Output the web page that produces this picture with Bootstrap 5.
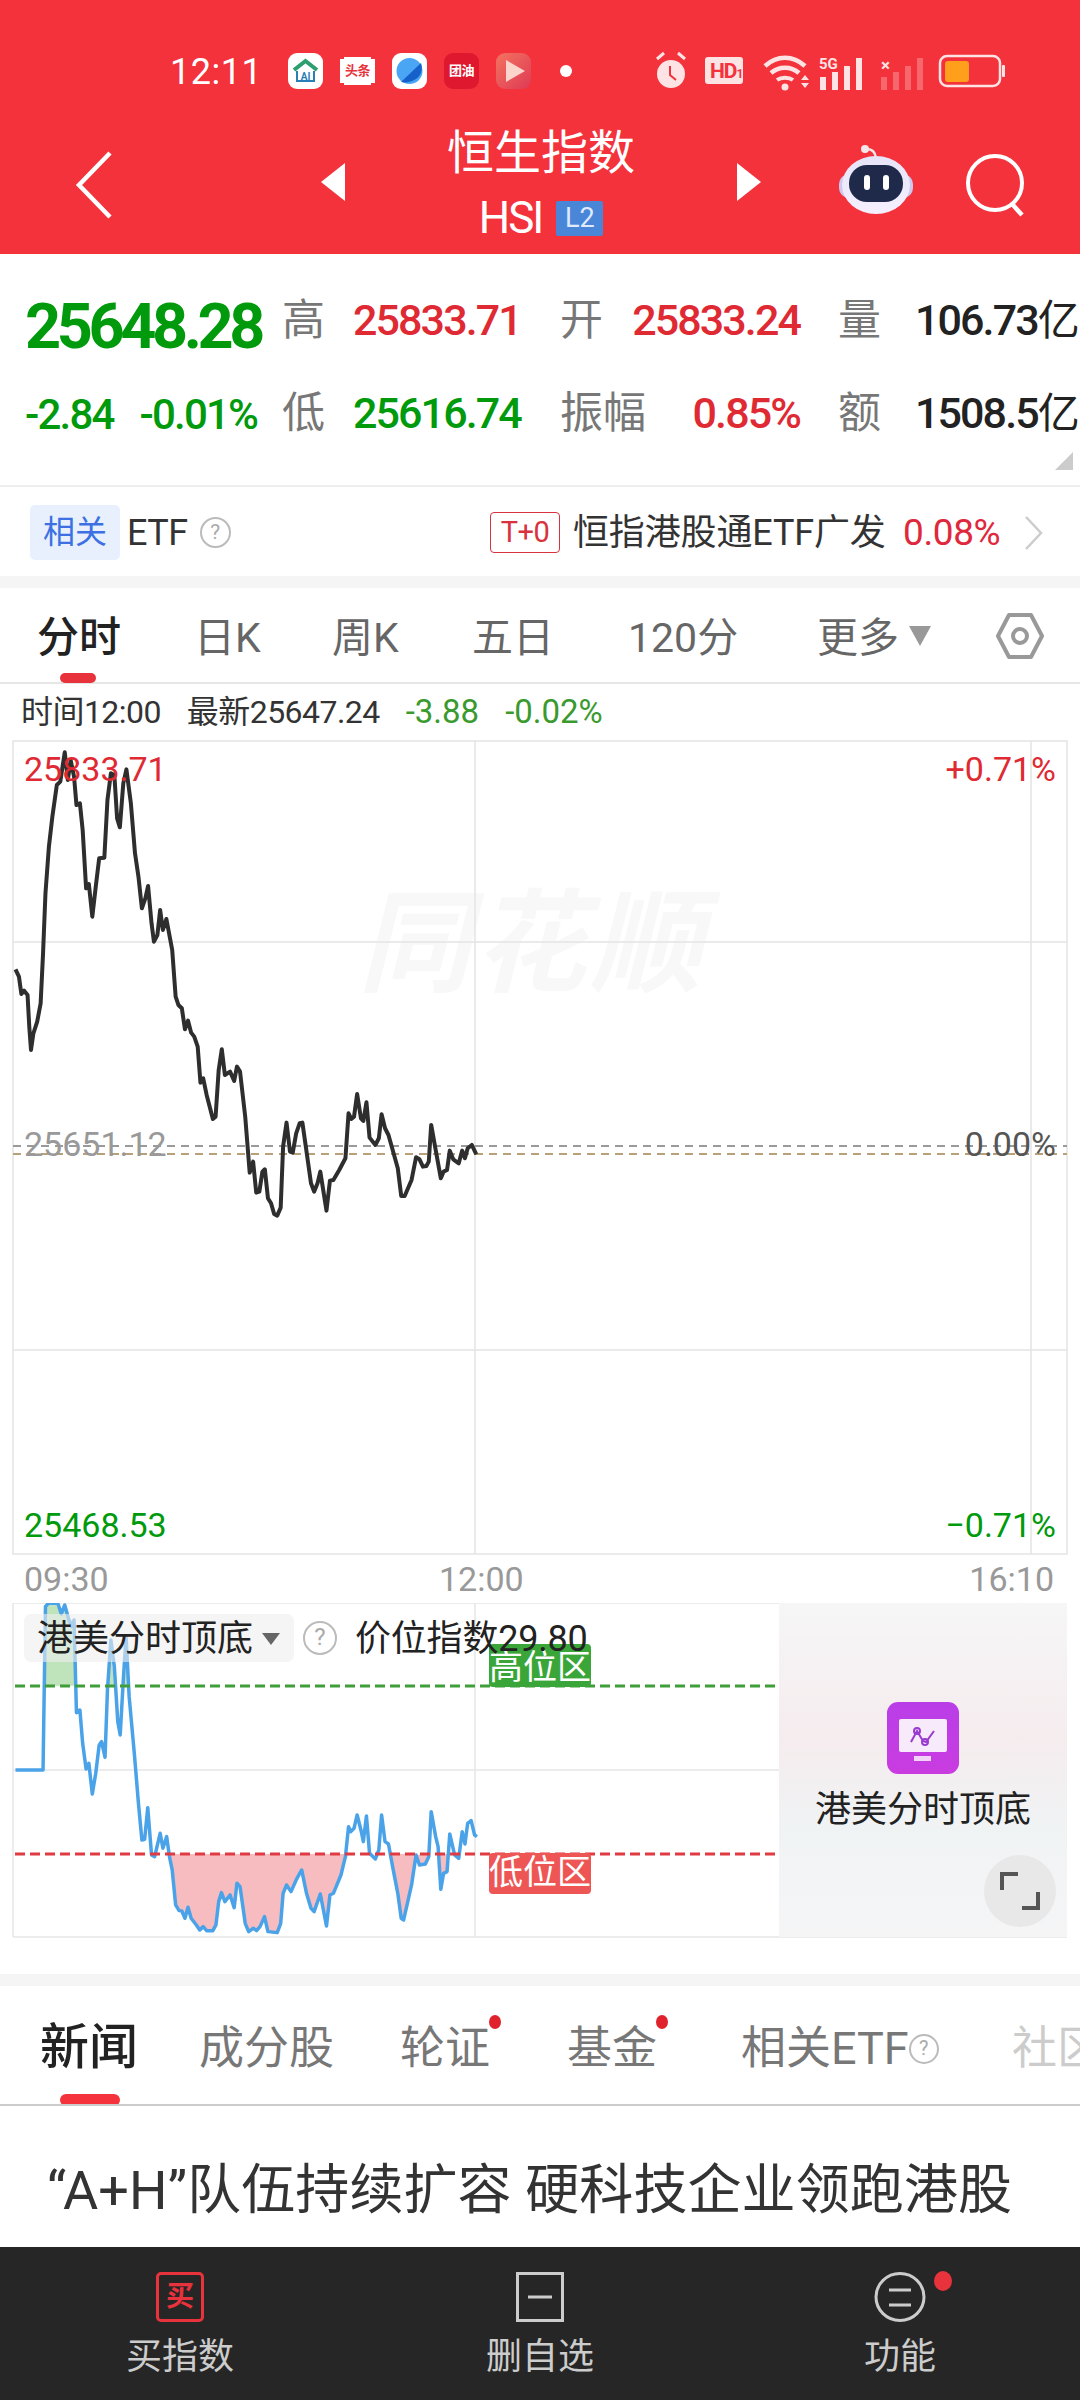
<!DOCTYPE html>
<html lang="zh-CN">
<head>
  <meta charset="UTF-8">
  <title>恒生指数 HSI</title>
  <link href="https://cdn.jsdelivr.net/npm/bootstrap@5.3.0/dist/css/bootstrap.min.css" rel="stylesheet">
  <style>
    html, body { width: 1080px; height: 2400px; overflow: hidden; }
    body { background: #fff; font-family: Roboto, "Noto Sans CJK SC", sans-serif; color: #222; }
    .screen { position: relative; width: 1080px; height: 2400px; overflow: hidden; }

    .top-red { background: #f3323b; height: 254px; color: #fff; }
    .status-row { height: 110px; padding: 52px 0 0 170px; }
    .clock { font-size: 36px; line-height: 40px; width: 118px; letter-spacing: .5px; color: #fff; }
    .app-ico { width: 35px; height: 36px; border-radius: 9px; margin-right: 17px; flex: none; margin-top: 1px; }
    .app-ico svg { display: block; }
    .app-txt { font-size: 13px; font-weight: 700; line-height: 36px; text-align: center; letter-spacing: -.5px; }
    .ico-white { background: #fff; }
    .ico-red { background: #e0182f; color: #fff; }
    .ico-orange { background: linear-gradient(135deg, #f4735f, #de3a55); }
    .ico-news { color: #e8323c; background: #fff; height: 24px; margin-top: 7px; line-height: 24px; border-radius: 0; box-shadow: 0 -6px 0 -4px #fff, 0 6px 0 -4px #fff; }
    .note-dot { width: 12px; height: 12px; border-radius: 50%; background: #fff; margin: 13px 0 0 12px; }
    .sys-icons { position: absolute; left: 655px; top: 49px; }

    .nav-row { height: 144px; position: relative; }
    .title-block { width: 392px; text-align: center; }
    .index-name { font-size: 47px; line-height: 56px; padding-top: 15px; color: #fff; }
    .index-code { font-size: 44px; line-height: 50px; margin-top: 12px; letter-spacing: -2px; gap: 14px; }
    .l2-tag { background: #4a86d8; color: #dfeaff; font-size: 27px; line-height: 35px; width: 47px; height: 35px; border-radius: 2px; letter-spacing: 0; }
    .nav-back { width: 321px; padding: 40px 0 0 74px; }
    .nav-side { width: 24px; padding-top: 53px; }
    .nav-robot { position: absolute; left: 838px; top: 34px; }
    .nav-search { position: absolute; left: 964px; top: 40px; }

    .stat-wrap { height: 231px; position: relative; padding: 38px 0 0 25px; }
    .stat-line { display: flex; height: 93px; align-items: flex-start; white-space: nowrap; }
    .stat-main { width: 257px; }
    .stat-lab { font-size: 43px; line-height: 56px; color: #777; width: 71px; }
    .stat-lab-b { width: 72px; }
    .stat-lab-c { width: 77px; margin-left: 38px; }
    .stat-val { font-size: 43px; line-height: 56px; font-weight: 500; letter-spacing: -1.9px; width: 207px; }
    .stat-val-b { width: 168px; text-align: right; }
    .stat-qty { font-size: 43px; line-height: 56px; font-weight: 500; letter-spacing: -1.9px; color: #222; }
    .cn-yi { font-weight: 400; font-size: 42px; letter-spacing: 0; }
    .big-price { font-size: 63px; line-height: 70px; font-weight: 700; letter-spacing: -4.4px; color: #009a0c; }
    .small-chg { font-size: 42px; line-height: 56px; font-weight: 500; letter-spacing: -1.8px; color: #009a0c; margin-top: 2px; gap: 26px; }
    .up-red { color: #df2a33; }
    .down-green { color: #009a0c; }
    .fold-mark { position: absolute; right: 7px; bottom: 15px; width: 0; height: 0; border-left: 18px solid transparent; border-bottom: 18px solid #ccc; }

    .etf-row { height: 91px; border-top: 2px solid #eee; padding-left: 30px; padding-top: 2px; }
    .etf-tag { width: 90px; height: 55px; background: #e8f0fd; color: #3d70e2; font-size: 32px; line-height: 55px; border-radius: 5px; text-align: center; }
    .etf-word { font-size: 36px; margin-left: 7px; color: #333; letter-spacing: -.5px; }
    .hint-ring { width: 31px; height: 31px; border: 2px solid #bbb; border-radius: 50%; color: #aaa; font-size: 21px; line-height: 27px; text-align: center; margin-left: 12px; flex: none; }
    .tplus { position: absolute; left: 490px; width: 70px; height: 41px; border: 1.5px solid #d8323c; border-radius: 4px; color: #d8323c; font-size: 29px; line-height: 38px; text-align: center; letter-spacing: -.5px; }
    .etf-name { position: absolute; left: 573px; font-size: 36px; color: #333; letter-spacing: -.15px; }
    .etf-pct { position: absolute; left: 903px; font-size: 37px; color: #e0283c; letter-spacing: -.4px; }
    .etf-arrow { position: absolute; left: 1024px; }

    .gap-band { height: 12px; background: #f5f5f5; }

    .period-tabs { height: 96px; border-bottom: 2px solid #e6e6e6; position: relative; }
    .period-tab { position: absolute; top: 23px; font-size: 41px; line-height: 54px; color: #666; white-space: nowrap; }
    .period-on { color: #222; font-weight: 500; font-size: 42px; }
    .tab-bar-red { position: absolute; left: 60px; top: 85px; width: 36px; height: 10px; border-radius: 5px; background: #e8323c; }

    .quote-line { height: 56px; padding-left: 21px; font-size: 32px; letter-spacing: -.55px; gap: 26px; color: #333; }
    .green-soft { color: #3a9a2e; font-size: 33px; letter-spacing: 0; }

    .chart-box { position: relative; height: 863px; }
    .chart-box svg { position: absolute; left: 0; top: 0; }
    .chart-lab { position: absolute; font-size: 34px; line-height: 40px; white-space: nowrap; }
    .lab-grey { color: #999; }
    .wm-text { position: absolute; left: 358px; top: 140px; font-size: 112px; line-height: 130px; letter-spacing: 4px; color: #f8f8f8; font-weight: 700; font-style: italic; white-space: nowrap; }

    .sub-chart { position: relative; height: 371px; }
    .sub-chart > svg { position: absolute; left: 0; top: 0; }
    .algo-chip { position: absolute; left: 24px; top: 11px; width: 270px; height: 48px; background: rgba(238,238,238,.6); border-radius: 7px; font-size: 36px; line-height: 50px; padding-left: 13px; color: #222; white-space: nowrap; }
    .algo-caret { position: absolute; left: 238px; top: 19px; width: 0; height: 0; border-left: 9px solid transparent; border-right: 9px solid transparent; border-top: 12px solid #666; }
    .algo-ring { position: absolute; left: 303px; top: 18px; width: 34px; height: 34px; font-size: 24px; line-height: 29px; margin: 0; border-width: 2.5px; }
    .algo-val { position: absolute; left: 355px; top: 10px; font-size: 36px; line-height: 52px; color: #222; white-space: nowrap; letter-spacing: -.2px; z-index: 3; }
    .zone-tag { position: absolute; left: 489px; width: 102px; color: #fff; font-size: 34px; text-align: center; border-radius: 4px; }
    .zone-high { top: 41px; height: 43px; line-height: 46px; background: #3aa639; }
    .zone-low { top: 250px; height: 41px; line-height: 38px; background: #ee5555; }
    .algo-panel { position: absolute; left: 779px; top: 0; width: 288px; height: 334px; background: linear-gradient(180deg, #f6f6f7 0%, #f5ecee 40%, #f0f3f4 68%, #f5f5f6 100%); }
    .algo-panel svg { position: absolute; left: 108px; top: 99px; }
    .algo-name { position: absolute; left: 0; width: 100%; top: 183px; text-align: center; font-size: 36px; line-height: 48px; color: #222; }
    .zoom-btn { position: absolute; left: 205px; top: 252px; width: 72px; height: 72px; border-radius: 50%; background: #e8e8e8; }
    .zoom-btn svg { position: absolute; left: 15px; top: 15px; }

    .news-tabs { height: 120px; border-bottom: 2px solid #ccc; position: relative; overflow: hidden; }
    .news-tab { position: absolute; top: 33px; font-size: 45px; line-height: 60px; color: #777; white-space: nowrap; }
    .news-on { font-size: 49px; color: #222; font-weight: 500; top: 32px; }
    .news-dot { position: absolute; top: 29px; width: 12px; height: 14px; border-radius: 50%; background: #e0222c; }
    .news-bar { position: absolute; left: 60px; top: 108px; width: 60px; height: 12px; border-radius: 6px; background: #f4333c; }
    .news-fade { color: #ccc; }
    .news-head { font-size: 54px; line-height: 70px; color: #333; padding: 50px 0 0 47px; letter-spacing: .1px; white-space: nowrap; }

    .bottom-bar { position: absolute; left: 0; top: 2247px; width: 1080px; height: 153px; background: #262626; color: #ccc; }
    .bar-item { width: 360px; position: relative; text-align: center; padding-top: 25px; }
    .bar-item svg { display: block; margin: 0 auto; }
    .bar-word { font-size: 36px; line-height: 46px; margin-top: 12px; }
    .buy-box { width: 48px; height: 50px; border: 3px solid #e8323c; border-radius: 5px; margin: 0 auto; color: #e8323c; font-size: 28px; line-height: 43px; font-weight: 700; }
    .fn-dot { position: absolute; left: 214px; top: 24px; width: 18px; height: 20px; border-radius: 50%; background: #e8323c; }
  </style>
</head>
<body>
<div class="screen">

  <div class="top-red">
    <div class="status-row d-flex position-relative">
      <div class="clock">12:11</div>
      <div class="app-ico ico-white">
        <svg width="35" height="36" viewBox="0 0 35 36"><path d="M6 17 17.5 8 29 17" fill="none" stroke="#2f9e6e" stroke-width="4"/><path d="M9 18v10h17V18" fill="none" stroke="#2b7fb8" stroke-width="2"/><text x="17.5" y="27" text-anchor="middle" font-size="10" font-weight="700" fill="#2b7fb8" font-family="Roboto">AI</text></svg>
      </div>
      <div class="app-ico app-txt ico-news">头条</div>
      <div class="app-ico ico-white">
        <svg width="35" height="36" viewBox="0 0 35 36"><circle cx="17.5" cy="18" r="13" fill="#4aa6f5"/><path d="M9 29 29 10c2 6 0 13-5 16-5 3-10 4-15 3Z" fill="#1560c9"/></svg>
      </div>
      <div class="app-ico app-txt ico-red">团油</div>
      <div class="app-ico ico-orange">
        <svg width="35" height="36" viewBox="0 0 35 36"><path d="M10 7 29 18 10 29Z" fill="#fbd5cc"/></svg>
      </div>
      <div class="note-dot"></div>
      <svg class="sys-icons" width="355" height="46" viewBox="0 0 355 46">
        <g fill="#fde3e3">
          <circle cx="16" cy="25" r="14"/>
          <path d="M2 10 9 4M30 10 23 4" stroke="#fde3e3" stroke-width="3" fill="none"/>
          <path d="M15 17v9l6 5" stroke="#f3323b" stroke-width="2" fill="none"/>
          <rect x="50" y="8" width="38" height="27" rx="3"/>
          <path d="M110 17c12-11 28-11 40 0" stroke="#fde3e3" stroke-width="4.5" fill="none"/>
          <path d="M116 24c8-7 20-7 28 0" stroke="#fde3e3" stroke-width="4.5" fill="none"/>
          <path d="M122 31c4-3 12-3 16 0" stroke="#fde3e3" stroke-width="4" fill="none"/>
          <circle cx="130" cy="38" r="3.5"/>
          <path d="M146 31l4-5 4 5ZM146 34l4 5 4-5Z"/>
          <rect x="165" y="28" width="6" height="13"/><rect x="177" y="23" width="6" height="18"/><rect x="189" y="17" width="6" height="24"/><rect x="201" y="9" width="6" height="32"/>
        </g>
        <text x="164" y="20" font-size="15" font-weight="700" fill="#fde3e3" font-family="Roboto">5G</text>
        <text x="55" y="29" font-size="21" font-weight="700" fill="#f3323b" font-family="Roboto" letter-spacing="-1">HD<tspan font-size="12">1</tspan></text>
        <text x="226" y="22" font-size="17" font-weight="700" fill="#fde3e3" font-family="Roboto">×</text>
        <g fill="#fde3e3" opacity=".3">
          <rect x="226" y="28" width="6" height="13"/><rect x="238" y="23" width="6" height="18"/><rect x="250" y="17" width="6" height="24"/><rect x="262" y="9" width="6" height="32"/>
        </g>
        <rect x="285" y="7" width="60" height="30" rx="7" fill="none" stroke="#fde3e3" stroke-width="2.5"/>
        <rect x="290" y="12" width="24" height="21" rx="3" fill="#ff9f1c"/>
        <rect x="347" y="16" width="3" height="12" rx="1" fill="#fde3e3"/>
      </svg>
    </div>
    <div class="nav-row d-flex">
      <div class="nav-back">
        <svg width="40" height="70" viewBox="0 0 40 70"><path d="M36 3 5 35l31 32" fill="none" stroke="#fff" stroke-width="4.5"/></svg>
      </div>
      <div class="nav-side">
        <svg width="24" height="38" viewBox="0 0 24 38"><path d="M24 0v38L0 19Z" fill="#fff"/></svg>
      </div>
      <div class="title-block">
        <div class="index-name">恒生指数</div>
        <div class="index-code d-flex justify-content-center align-items-center">
          <span>HSI</span><span class="l2-tag">L2</span>
        </div>
      </div>
      <div class="nav-side">
        <svg width="24" height="38" viewBox="0 0 24 38"><path d="M0 0v38l24-19Z" fill="#fff"/></svg>
      </div>
      <svg class="nav-robot" width="76" height="74" viewBox="0 0 76 74">
        <defs><linearGradient id="robotShell" x1="0" y1="0" x2="0" y2="1"><stop offset="0" stop-color="#e6e4f8"/><stop offset="1" stop-color="#f5f0ff"/></linearGradient></defs>
        <path d="M38 14c-1-7-5-9-9-9" fill="none" stroke="#f5e6ea" stroke-width="2.5"/>
        <circle cx="27" cy="5" r="4" fill="#f5e6ea"/>
        <rect x="1" y="30" width="74" height="24" rx="10" fill="#cfc8ee"/>
        <ellipse cx="38" cy="41" rx="34" ry="29" fill="url(#robotShell)"/>
        <rect x="11" y="21" width="54" height="37" rx="18" fill="#1f2a4a"/>
        <rect x="26" y="31" width="6" height="15" rx="3" fill="#fff"/><rect x="45" y="31" width="6" height="15" rx="3" fill="#fff"/>
      </svg>
      <svg class="nav-search" width="66" height="70" viewBox="0 0 66 70"><circle cx="31" cy="33" r="27" fill="none" stroke="#fff" stroke-width="4"/><path d="M49 55l9 10" stroke="#fff" stroke-width="4.5"/></svg>
    </div>
  </div>

  <div class="stat-wrap">
    <div class="stat-line">
      <div class="stat-main big-price">25648.28</div>
      <div class="stat-lab">高</div>
      <div class="stat-val up-red">25833.71</div>
      <div class="stat-lab stat-lab-b">开</div>
      <div class="stat-val stat-val-b up-red">25833.24</div>
      <div class="stat-lab stat-lab-c">量</div>
      <div class="stat-qty">106.73<span class="cn-yi">亿</span></div>
    </div>
    <div class="stat-line">
      <div class="stat-main small-chg d-flex"><span>-2.84</span><span>-0.01%</span></div>
      <div class="stat-lab">低</div>
      <div class="stat-val down-green">25616.74</div>
      <div class="stat-lab stat-lab-b">振幅</div>
      <div class="stat-val stat-val-b up-red">0.85%</div>
      <div class="stat-lab stat-lab-c">额</div>
      <div class="stat-qty">1508.5<span class="cn-yi">亿</span></div>
    </div>
    <div class="fold-mark"></div>
  </div>

  <div class="etf-row d-flex align-items-center position-relative">
    <div class="etf-tag">相关</div>
    <div class="etf-word">ETF</div>
    <div class="hint-ring">?</div>
    <div class="tplus">T+0</div>
    <div class="etf-name">恒指港股通ETF广发</div>
    <div class="etf-pct">0.08%</div>
    <svg class="etf-arrow" width="20" height="36" viewBox="0 0 20 36"><path d="M2 2l15 16L2 34" fill="none" stroke="#ccc" stroke-width="2.5"/></svg>
  </div>

  <div class="gap-band"></div>

  <div class="period-tabs">
    <div class="period-tab period-on" style="left:37px">分时</div>
    <div class="period-tab" style="left:194px">日K</div>
    <div class="period-tab" style="left:332px">周K</div>
    <div class="period-tab" style="left:472px">五日</div>
    <div class="period-tab" style="left:628px">120分</div>
    <div class="period-tab" style="left:817px">更多</div>
    <svg class="position-absolute" style="left:908px;top:38px" width="24" height="20" viewBox="0 0 24 20"><path d="M1 0h22L12 20Z" fill="#999"/></svg>
    <svg class="position-absolute" style="left:996px;top:24px" width="48" height="48" viewBox="0 0 48 48"><path d="M13 3h22l11 21-11 21H13L2 24Z" fill="none" stroke="#999" stroke-width="4" stroke-linejoin="round"/><circle cx="24" cy="24" r="7" fill="none" stroke="#999" stroke-width="4"/></svg>
    <div class="tab-bar-red"></div>
  </div>

  <div class="quote-line d-flex align-items-center">
    <span>时间12:00</span><span>最新25647.24</span><span class="green-soft">-3.88</span><span class="green-soft">-0.02%</span>
  </div>

  <!-- price chart, y origin 740 -->
  <div class="chart-box">
    <div class="wm-text">同花顺</div>
    <svg width="1080" height="863" viewBox="0 740 1080 863">
      <g stroke="#e4e4e4" stroke-width="1.5" fill="none">
        <rect x="13" y="741" width="1054" height="813"/>
        <path d="M475 741V1554M1031 741V1554M13 942H1067M13 1350H1067"/>
      </g>
      <path d="M13 1146H1067" stroke="#9a9a9a" stroke-width="2" stroke-dasharray="8 6" fill="none"/>
      <path d="M13 1154H1067" stroke="#b8a07a" stroke-width="2" stroke-dasharray="8 6" fill="none"/>
      <g transform="translate(0 720) scale(.3444 .3333)">
        <polyline fill="none" stroke="#2e2e2e" stroke-width="4" vector-effect="non-scaling-stroke" stroke-linejoin="round" points="45,748 55,770 62,822 70,812 80,825 85,920 90,990 97,940 108,905 118,850 125,700 132,520 142,380 152,290 165,195 175,185 188,97 197,180 205,120 215,170 222,255 232,250 240,330 250,505 258,492 268,590 278,500 288,415 303,413 312,240 322,160 332,165 340,295 348,322 358,190 367,148 380,250 392,400 402,470 412,565 422,535 430,498 440,610 447,665 457,645 465,570 473,630 483,597 500,690 510,830 518,855 528,865 537,928 546,902 555,938 564,950 574,980 582,1088 590,1075 600,1125 610,1165 618,1197 626,1190 635,1050 644,988 653,1065 668,1055 680,1083 688,1040 697,1055 712,1190 725,1358 735,1325 744,1418 753,1415 762,1355 769,1348 778,1435 787,1450 796,1482 805,1487 815,1463 822,1280 832,1208 842,1295 850,1298 860,1240 870,1210 878,1208 888,1280 903,1390 912,1415 922,1390 930,1355 948,1472 958,1382 968,1380 985,1350 1003,1315 1012,1180 1020,1197 1028,1190 1037,1122 1048,1195 1055,1203 1064,1147 1073,1253 1090,1275 1100,1255 1108,1183 1118,1225 1128,1245 1155,1345 1165,1428 1175,1428 1195,1380 1208,1312 1218,1318 1228,1340 1238,1338 1245,1325 1252,1215 1265,1290 1280,1375 1288,1355 1298,1350 1306,1292 1316,1318 1332,1330 1342,1292 1350,1315 1358,1285 1370,1275 1383,1303"/>
      </g>
    </svg>
    <div class="chart-lab up-red" style="left:24px;top:9px">25833.71</div>
    <div class="chart-lab up-red" style="right:24px;top:9px">+0.71%</div>
    <div class="chart-lab lab-grey" style="left:24px;top:384px">25651.12</div>
    <div class="chart-lab" style="right:24px;top:384px;color:#555">0.00%</div>
    <div class="chart-lab down-green" style="left:24px;top:765px">25468.53</div>
    <div class="chart-lab down-green" style="right:24px;top:765px">−0.71%</div>
    <div class="chart-lab lab-grey" style="left:24px;top:819px">09:30</div>
    <div class="chart-lab lab-grey" style="left:439px;top:819px">12:00</div>
    <div class="chart-lab lab-grey" style="right:26px;top:819px">16:10</div>
  </div>

  <!-- indicator chart, y origin 1603 -->
  <div class="sub-chart">
    <svg width="1080" height="371" viewBox="0 1603 1080 371">
      <g stroke="#e6e6e6" stroke-width="1.5" fill="none">
        <path d="M13 1603H1067M13 1603V1937M13 1937H1067M475 1603V1937M13 1770H779"/>
      </g>
      <g transform="translate(0 1540) scale(.3444 .3333)">
        <g fill="#bfe3bb" stroke="none">
          <polygon points="132,437 132,200 140,190 168,190 178,222 188,195 200,240 215,240 219,437"/>
          <polygon points="313,437 322,300 331,437"/>
          <polygon points="358,437 366,290 374,437"/>
        </g>
        <g fill="#f7bcc0" stroke="none">
          <polygon points="488,942 500,990 510,1095 520,1112 528,1113 537,1135 546,1102 555,1135 570,1155 580,1170 590,1160 600,1172 618,1172 627,1155 635,1085 643,1058 653,1085 668,1065 680,1103 688,1030 697,1040 712,1150 722,1175 735,1165 745,1172 755,1160 768,1130 778,1175 805,1178 815,1150 822,1060 832,1035 845,1055 860,1020 876,990 890,1060 903,1105 912,1115 930,1062 948,1158 958,1065 968,1060 990,1005 1003,942"/>
          <polygon points="1128,942 1140,980 1155,1060 1165,1135 1172,1140 1195,1035 1208,942"/>
          <polygon points="1208,945 1218,975 1235,972 1245,942"/>
          <polygon points="1272,942 1280,1048 1288,1000 1298,995 1304,942"/>
        </g>
        <polyline fill="none" stroke="#4aa3e8" stroke-width="3.5" vector-effect="non-scaling-stroke" stroke-linejoin="round" points="45,690 125,690 132,200 140,190 168,190 178,222 188,195 200,240 208,260 215,240 222,518 232,510 240,610 250,687 258,670 268,762 278,700 288,615 295,605 305,652 312,450 322,300 332,380 342,545 349,585 358,420 366,290 375,470 390,640 402,790 412,900 420,898 429,803 440,945 449,950 465,880 473,925 484,890 492,950 500,990 510,1095 520,1112 528,1113 537,1135 546,1102 555,1135 570,1155 580,1170 590,1160 600,1172 618,1172 627,1155 635,1085 643,1058 653,1085 668,1065 680,1103 688,1030 697,1040 712,1150 722,1175 735,1165 745,1172 755,1160 768,1130 778,1175 805,1178 815,1150 822,1060 832,1035 845,1055 860,1020 876,990 890,1060 903,1105 912,1115 930,1062 948,1158 958,1065 968,1060 990,1005 1003,950 1012,860 1018,875 1028,865 1037,825 1048,870 1055,905 1064,828 1073,940 1090,957 1100,930 1108,825 1118,905 1128,912 1140,980 1155,1060 1165,1135 1172,1140 1195,1035 1208,945 1218,975 1235,972 1245,950 1252,815 1265,890 1272,920 1280,1048 1288,1000 1298,995 1306,882 1320,945 1332,955 1342,875 1350,912 1358,850 1368,842 1378,885 1385,890"/>
      </g>
      <path d="M15 1686H776" stroke="#3f9e3a" stroke-width="3" stroke-dasharray="10 5" fill="none"/>
      <path d="M15 1854H776" stroke="#e03a42" stroke-width="3" stroke-dasharray="10 5" fill="none"/>
    </svg>
    <div class="algo-chip">港美分时顶底<span class="algo-caret"></span></div>
    <div class="hint-ring algo-ring">?</div>
    <div class="zone-tag zone-high">高位区</div>
    <div class="algo-val">价位指数29.80</div>
    <div class="zone-tag zone-low">低位区</div>
    <div class="algo-panel">
      <svg width="72" height="72" viewBox="0 0 72 72">
        <defs><linearGradient id="algoPurple" x1="0" y1="0" x2="0" y2="1"><stop offset="0" stop-color="#b93ee8"/><stop offset="1" stop-color="#c93ce0"/></linearGradient></defs>
        <rect width="72" height="72" rx="11" fill="url(#algoPurple)"/>
        <rect x="12" y="17" width="48" height="33" rx="2" fill="#f6eafb"/>
        <rect x="27" y="54" width="17" height="5" fill="#f1d4f8"/>
        <path d="M24 40l6-11 6 10 3 1 8-11" fill="none" stroke="#9a3ad0" stroke-width="2"/>
        <circle cx="30" cy="29" r="3" fill="none" stroke="#9a3ad0" stroke-width="2"/>
        <circle cx="38" cy="40" r="3" fill="none" stroke="#9a3ad0" stroke-width="2"/>
      </svg>
      <div class="algo-name">港美分时顶底</div>
      <div class="zoom-btn">
        <svg width="42" height="42" viewBox="0 0 42 42"><path d="M3 20V4h16M39 22v16H23" fill="none" stroke="#555" stroke-width="4"/></svg>
      </div>
    </div>
  </div>

  <div class="gap-band"></div>

  <div class="news-tabs">
    <div class="news-tab news-on" style="left:40px">新闻</div>
    <div class="news-tab" style="left:199px">成分股</div>
    <div class="news-tab" style="left:400px">轮证</div>
    <div class="news-dot" style="left:489px"></div>
    <div class="news-tab" style="left:567px">基金</div>
    <div class="news-dot" style="left:656px"></div>
    <div class="news-tab d-flex align-items-center" style="left:741px">相关ETF<span class="hint-ring" style="margin-left:0;width:30px;height:30px;line-height:25px;font-size:20px">?</span></div>
    <div class="news-tab news-fade" style="left:1012px">社区</div>
    <div class="news-bar"></div>
  </div>

  <div class="news-head">“A+H”队伍持续扩容 硬科技企业领跑港股</div>

  <div class="bottom-bar d-flex">
    <div class="bar-item">
      <div class="buy-box">买</div>
      <div class="bar-word">买指数</div>
    </div>
    <div class="bar-item">
      <svg width="48" height="50" viewBox="0 0 48 50"><rect x="1.5" y="1.5" width="45" height="47" fill="none" stroke="#ccc" stroke-width="3"/><path d="M12 25h24" stroke="#ccc" stroke-width="3"/></svg>
      <div class="bar-word">删自选</div>
    </div>
    <div class="bar-item">
      <svg width="52" height="50" viewBox="0 0 52 50"><ellipse cx="26" cy="25" rx="24" ry="23.5" fill="none" stroke="#ccc" stroke-width="3"/><path d="M15 18h22M15 33h22" stroke="#ccc" stroke-width="3"/></svg>
      <div class="bar-word">功能</div>
      <div class="fn-dot"></div>
    </div>
  </div>
</div>
<script src="https://cdn.jsdelivr.net/npm/bootstrap@5.3.0/dist/js/bootstrap.bundle.min.js"></script>
</body>
</html>
